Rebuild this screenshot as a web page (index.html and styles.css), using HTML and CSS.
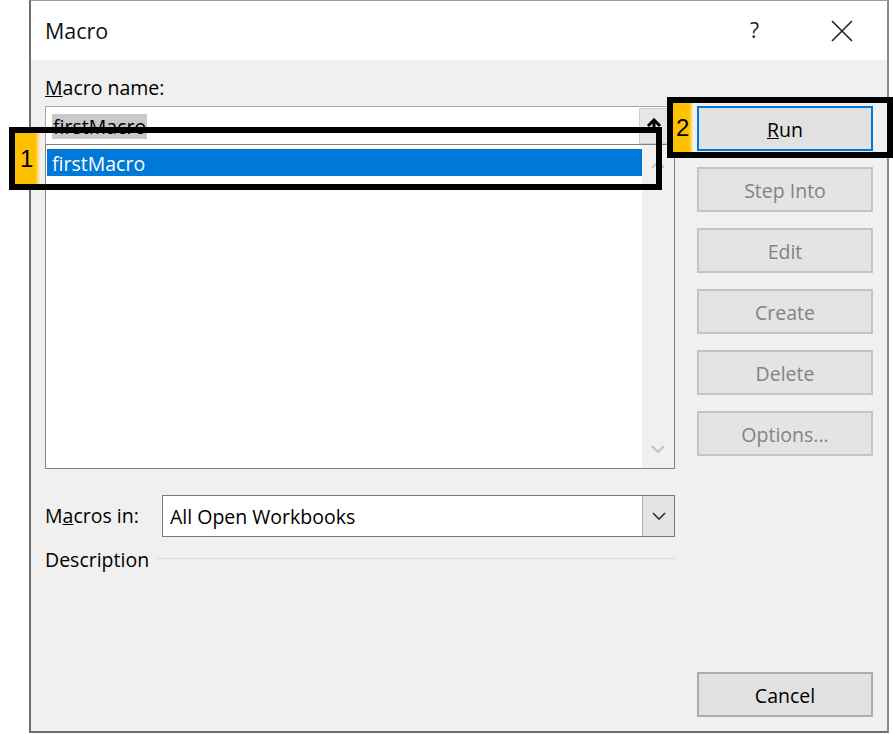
FILE: index.html
```html
<!DOCTYPE html>
<html>
<head>
<meta charset="utf-8">
<link rel="stylesheet" href="styles.css">
</head>
<body>
<div class="dialog">
  <div class="titlebar">
    <span class="title">Macro</span>
    <div class="title-actions">
      <span class="help">?</span>
      <svg class="close" width="22" height="22" viewBox="0 0 22 22"><path d="M1 1 L21 21 M21 1 L1 21" stroke="#222" stroke-width="1.6" fill="none"/></svg>
    </div>
  </div>
  <div class="body">
    <div class="left">
      <div class="label name-label"><u>M</u>acro name:</div>
      <div class="name-input">
        <span class="sel-text">firstMacro</span>
        <div class="ref-btn">
          <svg width="16" height="14" viewBox="0 0 16 14"><path d="M2 8 L8 2 L14 8" stroke="#000" stroke-width="3" fill="none"/><path d="M8 3 L8 14" stroke="#000" stroke-width="3"/></svg>
        </div>
      </div>
      <div class="listbox">
        <div class="items">
          <div class="item selected">firstMacro</div>
        </div>
        <div class="scrollbar">
          <svg width="14" height="9" viewBox="0 0 14 9"><path d="M1 8 L7 2 L13 8" stroke="#c3c3c3" stroke-width="2" fill="none"/></svg>
          <svg width="14" height="9" viewBox="0 0 14 9"><path d="M1 1 L7 7 L13 1" stroke="#c3c3c3" stroke-width="2" fill="none"/></svg>
        </div>
      </div>
      <div class="macros-in">
        <span class="label">M<u>a</u>cros in:</span>
        <div class="combo">
          <span class="combo-text">All Open Workbooks</span>
          <div class="combo-btn">
            <svg width="14" height="9" viewBox="0 0 14 9"><path d="M1 1 L7 7 L13 1" stroke="#333" stroke-width="1.6" fill="none"/></svg>
          </div>
        </div>
      </div>
      <div class="desc">
        <span class="label">Description</span>
        <span class="desc-line"></span>
      </div>
    </div>
    <div class="right">
      <button class="btn default"><u>R</u>un</button>
      <button class="btn disabled">Step Into</button>
      <button class="btn disabled">Edit</button>
      <button class="btn disabled">Create</button>
      <button class="btn disabled">Delete</button>
      <button class="btn disabled">Options...</button>
      <button class="btn cancel">Cancel</button>
    </div>
  </div>
</div>
<div class="callout callout-1"><span class="tag">1</span></div>
<div class="callout callout-2"><span class="tag">2</span></div>
</body>
</html>
```
FILE: styles.css
```css
html, body {
  margin: 0;
  padding: 0;
  background: #ffffff;
  width: 893px;
  height: 734px;
  overflow: hidden;
  font-family: "Open Sans", "Noto Sans", sans-serif;
  font-size: 19.5px;
  color: #000;
}

.dialog {
  margin-left: 29px;
  width: 860px;
  height: 733px;
  box-sizing: border-box;
  border-left: 2px solid #6e6e6e;
  border-right: 2px solid #8a8a8a;
  border-top: 1px solid #9a9a9a;
  border-bottom: 2px solid #6e6e6e;
  background: #f0f0f0;
  display: flex;
  flex-direction: column;
}

.titlebar {
  height: 59px;
  background: #ffffff;
  display: flex;
  align-items: center;
  justify-content: space-between;
  padding-left: 14px;
  padding-right: 34px;
}

.title {
  font-size: 21.5px;
  color: #111;
}

.title-actions {
  display: flex;
  align-items: center;
  gap: 72px;
}

.help {
  font-size: 21px;
  color: #222;
  margin-top: -2px;
}

.body {
  flex: 1;
  display: flex;
  padding: 16px 14px 14px 14px;
  gap: 22px;
}

.left {
  width: 630px;
  display: flex;
  flex-direction: column;
}

.label {
  line-height: 24px;
  white-space: nowrap;
}

.name-label {
  margin-bottom: 6px;
}

.name-input {
  height: 38px;
  box-sizing: border-box;
  background: #fff;
  border: 1px solid #a6a6a6;
  border-bottom: none;
  display: flex;
  align-items: center;
  justify-content: space-between;
  padding-left: 6px;
  margin-right: 1px;
}

.sel-text {
  background: #c9c9c9;
  line-height: 25px;
  padding: 0 1px;
  margin-top: 1px;
}

.ref-btn {
  width: 30px;
  height: 36px;
  background: #e6e6e6;
  border: 1px solid #cfcfcf;
  box-sizing: border-box;
  margin-right: 4px;
  display: flex;
  justify-content: center;
  padding-top: 9px;
}

.listbox {
  height: 325px;
  box-sizing: border-box;
  border: 1px solid #828282;
  background: #fff;
  display: flex;
}

.items {
  flex: 1;
  padding: 4px 0 0 1px;
}

.item {
  height: 27px;
  line-height: 29px;
  padding-left: 5px;
  color: #000;
}

.item.selected {
  background: #0078d7;
  color: #fff;
}

.scrollbar {
  width: 32px;
  background: #f0f0f0;
  display: flex;
  flex-direction: column;
  justify-content: space-between;
  align-items: center;
  padding: 15px 0 14px 0;
}

.macros-in {
  margin-top: 26px;
  display: flex;
  align-items: center;
}

.macros-in .label {
  width: 117px;
}

.combo {
  flex: 1;
  height: 42px;
  box-sizing: border-box;
  border: 1px solid #7a7a7a;
  background: #fff;
  display: flex;
  align-items: center;
  justify-content: space-between;
  padding-left: 7px;
}

.combo-btn {
  width: 32px;
  height: 40px;
  box-sizing: border-box;
  background: #e5e5e5;
  border-left: 1px solid #b0b0b0;
  display: flex;
  align-items: center;
  justify-content: center;
}

.desc {
  margin-top: 11px;
  display: flex;
  align-items: center;
  gap: 8px;
}

.desc-line {
  flex: 1;
  height: 1px;
  background: #d9d9d9;
  margin-top: -4px;
}

.right {
  width: 176px;
  display: flex;
  flex-direction: column;
  gap: 16px;
  padding-top: 30px;
}

.btn {
  height: 45px;
  box-sizing: border-box;
  font-family: inherit;
  font-size: 19.5px;
  background: #e1e1e1;
  border: 2px solid #adadad;
  color: #000;
  padding: 2px 0 0 0;
}

.btn.default {
  border: 2px solid #0078d7;
}

.btn.disabled {
  background: #e4e4e4;
  border-color: #c4c4c4;
  color: #838383;
}

.btn.cancel {
  margin-top: auto;
}

.callout {
  position: absolute;
  border: 6px solid #000;
  box-sizing: border-box;
  display: flex;
}

.callout-1 {
  left: 9px;
  top: 127px;
  width: 653px;
  height: 63px;
}

.callout-2 {
  left: 667px;
  top: 97px;
  width: 226px;
  height: 61px;
}

.tag {
  background: linear-gradient(to right, #ffc000 80%, #ffd966 92%, rgba(255, 192, 0, 0) 100%);
  font-family: "Liberation Sans", Arial, sans-serif;
  font-size: 24px;
  display: flex;
  align-items: center;
  padding-left: 5px;
}

.callout-1 .tag {
  width: 20px;
}

.callout-2 .tag {
  width: 17px;
  padding-left: 3px;
}
```
